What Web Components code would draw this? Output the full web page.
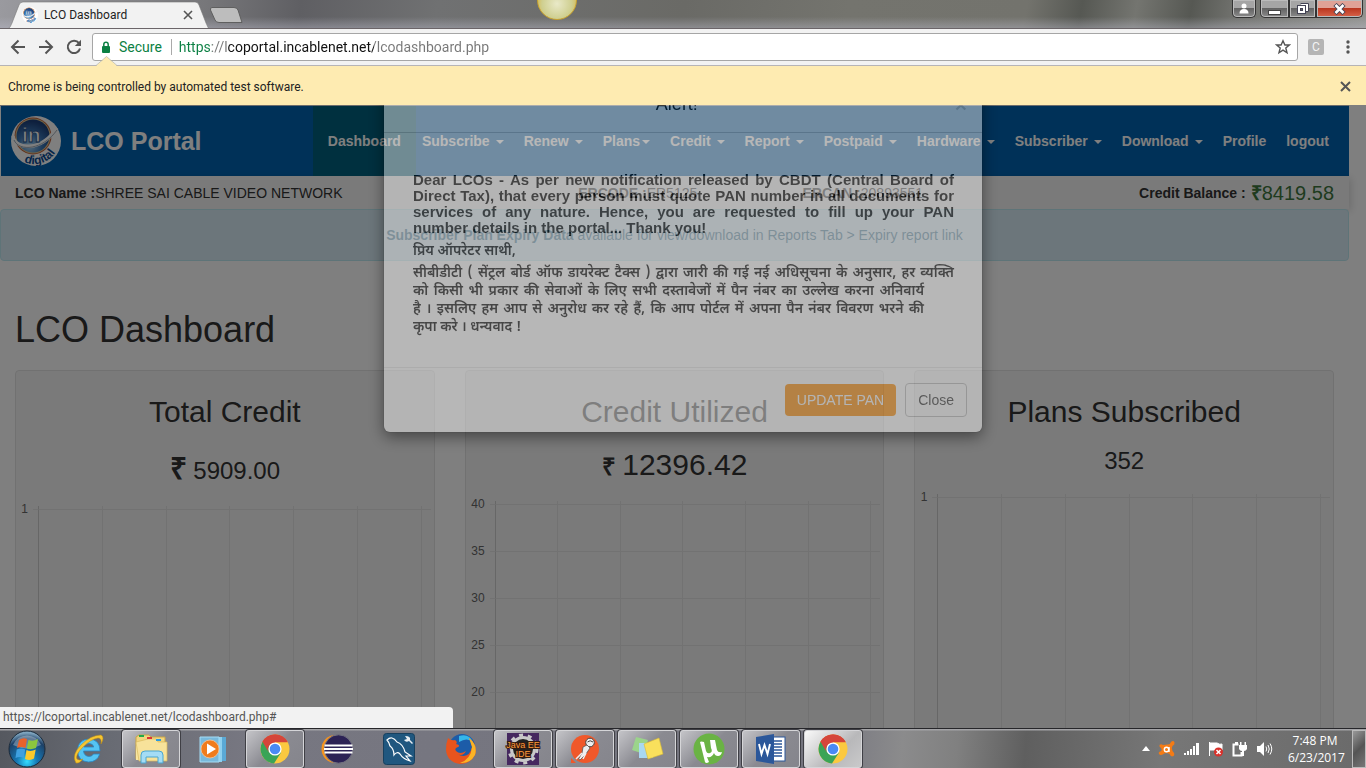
<!DOCTYPE html>
<html lang="en">
<head>
<meta charset="utf-8">
<title>LCO Dashboard</title>
<style>
html, body { margin: 0; height: 100%; }
body { display: flex; flex-direction: column; overflow: hidden; background: #808080; font-family: Roboto, "Noto Sans", sans-serif; font-size: 12px; color: #222; }
</style>
</head>
<body>
<window-titlebar></window-titlebar>
<browser-toolbar></browser-toolbar>
<info-bar>Chrome is being controlled by automated test software.</info-bar>
<browser-view>
  <lco-page></lco-page>
  <pan-alert slot="dialog"></pan-alert>
  <status-bubble slot="status">https://lcoportal.incablenet.net/lcodashboard.php#</status-bubble>
</browser-view>
<task-bar></task-bar>

<script>
function define(name, html, setup) {
  const template = document.createElement('template');
  template.innerHTML = '<style>:host,*{box-sizing:border-box}</style>' + html;
  customElements.define(name, class extends HTMLElement {
    constructor() {
      super();
      this.attachShadow({ mode: 'open' }).append(template.content.cloneNode(true));
    }
    connectedCallback() { if (setup) setup(this, this.shadowRoot); }
  });
}

/* ---------- Logo ---------- */
define('in-logo', `
<style>:host{display:block;flex:none} svg{display:block;width:100%;height:100%}</style>
<svg viewBox="0 0 50 50" role="img" aria-label="in digital">
  <defs>
    <radialGradient id="g" cx=".4" cy=".8" r=".75"><stop offset="0" stop-color="#a9d6f5"/><stop offset=".5" stop-color="#3c78b8"/><stop offset="1" stop-color="#1c3f7a"/></radialGradient>
    <path id="arc" d="M8 43A25 25 0 0 0 48 20"/>
  </defs>
  <circle cx="25" cy="25" r="25" fill="#fff"/>
  <circle cx="22" cy="20" r="18.500" fill="#c0603a"/>
  <circle cx="22" cy="20" r="17.500" fill="#e0c890"/>
  <circle cx="22" cy="20" r="16.500" fill="url(#g)"/>
  <path d="M2 20C4 34 30 36 46 12" fill="none" stroke="#fff" stroke-width="3.500"/>
  <path d="M3 24C8 36 32 34 46 14" fill="none" stroke="#8795a5" stroke-width=".8"/>
  <text x="11" y="26" font-family="Liberation Sans, sans-serif" font-weight="bold" font-size="21" fill="#fff" stroke="#23508a" stroke-width=".8">in</text>
  <text font-family="Liberation Sans, sans-serif" font-weight="bold" font-size="12" fill="#0b4b93"><textPath href="#arc" startOffset="6">digital</textPath></text>
</svg>`);

/* ---------- Browser window ---------- */
define('window-titlebar', `
<style>
:host{display:flex;flex:none;height:29px;position:relative;padding-left:5px;overflow:hidden;align-items:flex-end;border-bottom:1px solid #6b6569;
 background:linear-gradient(to bottom,rgba(255,255,255,0) 60%,rgba(190,190,205,.4)),linear-gradient(100deg,#9a9a9f 0,#77777a 15%,#5f5f63 22%,#707172 32%,#6a6a66 50%,#74746e 62%,#73736d 75%,#565853 79%,#747570 83%,#565853 87%,#6f706c 90%,#92938f 100%)}
.tab{position:relative;display:flex;align-items:center;width:206px;height:28px;margin-bottom:-1px;padding:0 18px 0 17px;gap:6px}
.tab svg.shape{position:absolute;inset:0;width:100%;height:100%}
.tab>*{position:relative}
in-logo{width:16px;height:16px}
.name{flex:1;color:#222;line-height:16px}
button{border:0;background:none;padding:0;display:block}
.new{width:34px;height:16px;margin:0 0 5px -2px}
.orb{position:absolute;left:537px;top:-20px;width:40px;height:40px;border-radius:50%;border:1px solid #c9a32f;background:radial-gradient(circle at 50% 60%,#e9e9c8 0,#cfcf90 50%,#d8b23c 80%)}
.controls{margin-left:auto;align-self:flex-start;display:flex;margin-right:3px}
.controls button{height:18px;border:1px solid #333;border-top:0;box-shadow:inset 0 0 0 1px #bbb;background:linear-gradient(#a5a5a5 0 45%,#606060 46%,#8a8a8a);display:grid;place-items:center}
.user{width:24px;border-radius:0 0 5px 5px;margin-right:4px}
.min{width:29px;border-radius:0 0 0 5px}.max{width:27px}
.controls .x{width:47px;border-radius:0 0 5px 0;background:linear-gradient(#e0a296 0 45%,#b8331c 46%,#d8644a)}
</style>
<div class="tab">
  <svg class="shape" viewBox="0 0 206 28" preserveAspectRatio="none"><path d="M0 28C5 28 5 26 7 22L14 4Q15 1 18 1H190Q193 1 194 4L201 22C203 26 203 28 206 28Z" fill="#f2f2f2" stroke="#777" stroke-width=".6"/></svg>
  <in-logo></in-logo><span class="name">LCO Dashboard</span>
  <button aria-label="Close tab"><svg width="10" height="10" style="display:block"><path d="M1 1L9 9M9 1L1 9" stroke="#555" stroke-width="1.600"/></svg></button>
</div>
<button class="new" aria-label="New tab"><svg width="34" height="16" style="display:block"><path d="M3 .5H25Q28 .5 29 3L33 15.500H10Q7 15.500 6 13L1.500 3Q1 .5 3 .5Z" fill="#bdbdbd" stroke="#5f5f5f"/></svg></button>
<div class="orb"></div>
<div class="controls">
  <button class="user" aria-label="Profile"><svg width="12" height="12"><circle cx="6" cy="3" r="2.500" fill="#fff"/><path d="M1.500 10.500Q1.500 6 6 6T10.500 10.500Z" fill="#fff"/></svg></button>
  <button class="min" aria-label="Minimize"><svg width="13" height="12"><rect x=".5" y="7.500" width="12" height="4" fill="#fff" stroke="#444"/></svg></button>
  <button class="max" aria-label="Restore"><svg width="13" height="12"><path d="M4.500 .5H12.500V8.500H10" fill="#fff" stroke="#445"/><rect x="1.500" y="2.500" width="8" height="8" fill="#fff" stroke="#445"/><rect x="4.500" y="5.500" width="2" height="2" fill="#666" stroke="#445"/></svg></button>
  <button class="x" aria-label="Close"><svg width="13" height="12"><path d="M2 1.500L11 10.500M11 1.500L2 10.500" stroke="#445" stroke-width="4.500"/><path d="M2.500 2L10.500 10M10.500 2L2.500 10" stroke="#fff" stroke-width="2.600"/></svg></button>
</div>`);

define('browser-toolbar', `
<style>
:host{display:flex;flex:none;height:37px;align-items:center;background:#f2f2f2;border-bottom:1px solid #b6b4b6;padding:0 10px;color:#555}
button{border:0;background:none;padding:0;width:28px;height:28px;display:grid;place-items:center;color:inherit;flex:none}
nav{display:flex;margin-left:-6px;width:86px}
.box{flex:1;min-width:0;display:flex;align-items:center;height:28px;background:#fff;border:1px solid #a6a6a6;border-radius:3px;margin-left:2px;padding-left:8px}
.secure{color:#0b8043;font-size:14px;margin:0 9px 0 8px;line-height:20px}
.sep{width:1px;height:16px;background:#aaa;margin-right:7px}
input{flex:1;min-width:0;border:0;outline:0;padding:0;font:14px/20px Roboto,"Noto Sans",sans-serif;color:transparent;
 background:linear-gradient(to right,#0b8043 0 33px,#777 33px 48px,#111 48px 195px,#777 195px);-webkit-background-clip:text;background-clip:text}
.ext{width:16px;height:16px;background:#b5b5b5;border-radius:2px;color:#f4f4f4;font:12px/16px Roboto,sans-serif;margin-left:10px}
.menu{width:8px;margin:0 4px 0 20px}
</style>
<nav aria-label="History">
<button aria-label="Back"><svg width="16" height="16" fill="none" stroke="currentColor" stroke-width="2"><path d="M15 8H2.500M8.500 1.500L2 8L8.500 14.500"/></svg></button>
<button aria-label="Forward"><svg width="16" height="16" fill="none" stroke="currentColor" stroke-width="2"><path d="M1 8H13.500M7.500 1.500L14 8L7.500 14.500"/></svg></button>
<button aria-label="Reload"><svg width="16" height="16" fill="none" stroke="currentColor" stroke-width="2"><path d="M13 4.200A6.200 6.200 0 1 0 14 9.500"/><path d="M15 .8V7H8.800Z" fill="currentColor" stroke="none"/></svg></button>
</nav>
<div class="box">
<svg width="10" height="12"><rect x="1" y="5" width="8" height="7" rx="1" fill="#0b8043"/><path d="M2.800 6V3.500a2.200 2.200 0 0 1 4.400 0V6" fill="none" stroke="#0b8043" stroke-width="1.500"/></svg>
<span class="secure">Secure</span><span class="sep"></span>
<input aria-label="Address" value="https://lcoportal.incablenet.net/lcodashboard.php">
<button aria-label="Bookmark"><svg width="16" height="16"><path d="M8 1.800L9.900 6H14.300L10.800 9L12 13.800L8 11.200L4 13.800L5.200 9L1.700 6H6.100Z" fill="none" stroke="#555" stroke-width="1.400"/></svg></button>
</div>
<button class="ext" aria-label="Extension">C</button>
<button class="menu" aria-label="Menu"><svg width="4" height="14" fill="#555"><circle cx="2" cy="2" r="1.700"/><circle cx="2" cy="7" r="1.700"/><circle cx="2" cy="12" r="1.700"/></svg></button>`);

define('info-bar', `
<style>
:host{display:flex;flex:none;height:39px;position:relative;align-items:center;justify-content:space-between;background:#feebb1;padding:2px 15px 0 8px;line-height:16px;color:#222}
.tip{position:absolute;left:96px;top:-10px}
button{border:0;background:none;padding:0}
svg{display:block}
</style>
<svg class="tip" width="21" height="10"><path d="M0 10L10.500 .5L21 10Z" fill="#feebb1"/><path d="M0 9.500L10.500 .5L21 9.500" fill="none" stroke="#b6b4a6" stroke-width=".7"/></svg>
<slot></slot>
<button aria-label="Close"><svg width="11" height="11"><path d="M1 1L10 10M10 1L1 10" stroke="#555" stroke-width="2"/></svg></button>`);

define('browser-view', `
<style>
:host{display:block;flex:1;min-height:0;position:relative;overflow:hidden;background:#fff;font-family:"Liberation Sans",Arial,sans-serif;font-size:14px;color:#333}
.backdrop{position:absolute;inset:0;background:rgba(0,0,0,.5)}
.status{position:absolute;left:0;bottom:0}
</style>
<slot></slot><div class="backdrop"></div><slot name="dialog"></slot><div class="status"><slot name="status"></slot></div>`);

define('status-bubble', `
<style>:host{display:block;width:453px;height:21px;background:#f2f2f2;border-top-right-radius:4px;padding:0 3px;font:12px/21px Roboto,"Noto Sans",sans-serif;color:#555;white-space:nowrap}</style><slot></slot>`);

/* ---------- Portal page ---------- */
define('nav-item', `
<style>
:host{display:flex;align-items:center;height:100%}
:host([active]){background:#00607e;padding:0 15px;margin-right:-14px}
a{color:#fff;text-decoration:none;font-weight:bold;display:flex;align-items:center;gap:6px}
:host([tight]) a{gap:2px}
i{display:none;border:4px solid transparent;border-top-color:#fff;border-bottom:0;margin-top:2px}
:host([menu]) i{display:block}
</style><a href="#"><slot></slot><i></i></a>`);

define('stat-card', `
<style>
:host{display:block;min-width:0;height:480px;background:#f5f5f5;border:1px solid #e3e3e3;border-radius:4px;padding-top:21px;text-align:center}
h2{margin:0;font-weight:normal;font-size:30px;line-height:40px}
.value{margin:var(--value-gap,19px) 0 var(--chart-gap,17px);line-height:36px;font-size:24px;white-space:nowrap}
::slotted(.big){font-size:30px}
</style>
<h2><slot name="title"></slot></h2>
<div class="value"><slot></slot></div>
<slot name="chart"></slot>`);

define('grid-chart', `
<style>
:host{display:block;padding:0 3px 0 5px;font-size:12px;line-height:14px;color:#666;--line:#e4e4e4;--axis:#cfcfcf}
.row{display:grid;grid-template-columns:auto 5px repeat(6,1fr) 10px;height:47px}
.row.tall{height:300px}
.row.cap{height:3px}
.row>*{border-top:1px solid var(--line)}
.row.cap>*{border-top:0}
.row .label{border:0;margin-top:-7px;width:12px;padding-right:5px;text-align:right}
.row.wide .label{width:19px}
.row.cap .label{margin:0}
.v{border-left:1px solid var(--line)}
.v.first{border-left-color:var(--axis)}
</style>`, (host, root) => {
  if (root.querySelector('.row')) return;
  const ticks = host.getAttribute('ticks').split(',');
  const wide = ticks[0].length > 1 ? ' wide' : '';
  const row = (label, cls) => {
    const el = document.createElement('div');
    el.className = 'row ' + cls + wide;
    el.innerHTML = '<div class="label">' + label + '</div><div></div><div class="v first"></div>' + '<div class="v"></div>'.repeat(6);
    root.append(el);
  };
  row('', 'cap');
  ticks.forEach(t => row(t, wide ? '' : 'tall'));
});

define('lco-page', `
<style>
:host{display:block;padding-right:17px}
header{display:flex;align-items:center;height:70px;border-top:0;background:#0062b0;padding:0 20px 0 10px;margin-left:1px}
.edge{height:1px;background:#d8d8d8}
in-logo{width:50px;height:50px}
.brand{font-size:25px;font-weight:bold;color:#fff;margin-left:10px;text-decoration:none;white-space:nowrap}
nav{display:flex;gap:20px;height:100%;margin-left:auto}
.account{display:grid;grid-template-columns:427fr 170fr 170fr 233fr;align-items:center;height:33px;padding:0 15px;background:#f5f5f5;box-shadow:2px 2px 8px rgba(0,0,0,.15);white-space:nowrap}
.balance{justify-self:end;display:flex;align-items:center;gap:5px}
.amount{font-size:20px;color:#3c763d}
.notice{background:#d9edf7;border:1px solid #bce8f1;border-radius:4px;padding:15px;line-height:20px;text-align:center;color:#31708f;position:relative}
h1{margin:49px 15px 20px;font-weight:normal;font-size:36px;line-height:40px}
.cards{display:grid;grid-template-columns:repeat(3,minmax(0,1fr));gap:30px;padding:0 15px}
.utilized{--value-gap:15px;--chart-gap:16px}
.plans{--value-gap:11px;--chart-gap:15px}
</style>
<div class="edge"></div>
<header><in-logo></in-logo><a class="brand" href="#">LCO Portal</a>
<nav><nav-item active>Dashboard</nav-item><nav-item menu>Subscribe</nav-item><nav-item menu>Renew</nav-item><nav-item menu tight>Plans</nav-item><nav-item menu>Credit</nav-item><nav-item menu>Report</nav-item><nav-item menu>Postpaid</nav-item><nav-item menu>Hardware</nav-item><nav-item menu>Subscriber</nav-item><nav-item menu>Download</nav-item><nav-item>Profile</nav-item><nav-item>logout</nav-item></nav></header>
<section class="account">
<span><b>LCO Name :</b>SHREE SAI CABLE VIDEO NETWORK</span><span><b>ERCODE :</b>ER5125</span><span><b>ERCAN :</b>20893551</span><span class="balance"><b>Credit Balance :</b><span class="amount"><b>₹</b>8419.58</span></span>
</section>
<div class="notice"><b>Subscriber Plan Expiry Data</b> available for view/download in Reports Tab &gt; Expiry report link</div>
<h1>LCO Dashboard</h1>
<div class="cards">
<stat-card><span slot="title">Total Credit</span><b class="big">₹</b> 5909.00<grid-chart slot="chart" ticks="1"></grid-chart></stat-card>
<stat-card class="utilized"><span slot="title">Credit Utilized</span><b>₹</b> <span class="big">12396.42</span><grid-chart slot="chart" ticks="40,35,30,25,20,15,10"></grid-chart></stat-card>
<stat-card class="plans"><span slot="title">Plans Subscribed</span>352<grid-chart slot="chart" ticks="1"></grid-chart></stat-card>
</div>`);

define('pan-alert', `
<style>
:host{display:block;position:absolute;top:-29px;left:0;right:0;pointer-events:none}
.dialog{pointer-events:auto;width:598px;max-width:100%;margin:0 auto;background:#fff;border-radius:6px;opacity:.44;box-shadow:0 5px 15px #000,0 0 0 1px rgba(0,0,0,.2);line-height:20px}
header{display:flex;padding:15px;border-bottom:1px solid #ccc;color:#000}
h4{flex:1;margin:0;font-weight:normal;font-size:18px;line-height:26px;text-align:center}
.close{border:0;background:none;padding:0;font:bold 21px/21px "Liberation Sans",sans-serif;color:rgba(0,0,0,.2)}
.body{padding:39px 28px 30px 29px;color:#000}
.en{margin:0;font-weight:bold;font-size:15px;line-height:16px;white-space:nowrap}
.en span{display:block;text-align:justify;text-align-last:justify}
.en span:last-child{text-align-last:left}
.hi{margin:0;font:600 14px/18px "Noto Sans Devanagari","Noto Sans",sans-serif}
.hi.greeting{margin:7px 0 4px}
.hi span{display:block;text-align-last:justify}
.hi .short{padding-right:30px}
.hi span:last-child{text-align-last:left}
footer{display:flex;justify-content:flex-end;align-items:center;gap:9px;border-top:1px solid #e5e5e5;padding:15px}
footer button{font:14px/20px "Liberation Sans",Arial,sans-serif;padding:6px 12px;border-radius:4px}
.update{background:#ff8c00;color:#fff;border:0}
.cancel{background:#fff;border:1px solid #bbb;color:#333}
</style>
<div class="dialog" role="dialog" aria-label="Alert">
<header><h4>Alert!</h4><button class="close" aria-label="Close">×</button></header>
<div class="body">
<p class="en"><span>Dear LCOs - As per new notification released by CBDT (Central Board of</span><span>Direct Tax), that every person must quote PAN number in all documents for</span><span>services of any nature. Hence, you are requested to fill up your PAN</span><span>number details in the portal... Thank you!</span></p>
<p class="hi greeting" lang="hi">प्रिय ऑपरेटर साथी,</p>
<p class="hi" lang="hi"><span>सीबीडीटी ( सेंट्रल बोर्ड ऑफ डायरेक्ट टैक्स ) द्वारा जारी की गई नई अधिसूचना के अनुसार, हर व्यक्ति</span><span class="short">को किसी भी प्रकार की सेवाओं के लिए सभी दस्तावेजों में पैन नंबर का उल्लेख करना अनिवार्य</span><span class="short">है । इसलिए हम आप से अनुरोध कर रहे हैं, कि आप पोर्टल में अपना पैन नंबर विवरण भरने की</span><span>कृपा करे । धन्यवाद !</span></p>
</div>
<footer><button class="update">UPDATE PAN</button><button class="cancel">Close</button></footer>
</div>`);

/* ---------- Taskbar ---------- */
const chromeIcon = `<svg width="30" height="30" viewBox="0 0 30 30"><circle cx="15" cy="15" r="14.500" fill="#fbc940"/><path d="M15 15L2.500 7.700A14.500 14.500 0 0 1 27.500 7.700H15Z" fill="#d5453a"/><path d="M15 15L2.500 7.700A14.500 14.500 0 0 0 14 29.500L21 18.500Z" fill="#3aa456"/><path d="M2.500 7.700A14.500 14.500 0 0 1 27.800 8.300H15A7 7 0 0 0 8.900 18.400Z" fill="#d5453a"/><circle cx="15" cy="15" r="6.600" fill="#fff"/><circle cx="15" cy="15" r="5.300" fill="#4a8af4"/></svg>`;
define('task-button', `
<style>
:host{display:block;width:58px;height:38px}
button{width:100%;height:100%;padding:0;border:1px solid transparent;border-radius:3px;background:none;display:grid;place-items:center}
:host([open]) button{border-color:#d5d5d8;box-shadow:0 0 0 1px #3f3f45;background:linear-gradient(135deg,#c4c4c8 0,#9c9ca2 35%,#8a8a91 50%,#85858c)}
:host([current]) button{background:linear-gradient(135deg,#fafafa,#b8b8ba 60%,#c9c9ca)}
</style><button><slot></slot></button>`, host => host.shadowRoot.querySelector('button').setAttribute('aria-label', host.title));

define('task-bar', `
<style>
:host{display:flex;flex:none;height:40px;align-items:center;border-top:1px solid #26262a;color:#fff;
 background:linear-gradient(#a3a3a6 0 1px,transparent 2px),linear-gradient(95deg,#55585f 0,#686b73 8%,#777781 18%,#74747e 60%,#8b8b8c 66%,#808080 70%,#5f5f5f 75%,#777 85%,#6a6a6a 100%)}
svg{display:block}
button{border:0;background:none;padding:0;color:inherit}
.start{margin:0 14px 0 8px}
.apps{display:flex;gap:4px}
.tray{margin-left:auto;display:flex;align-items:center;gap:8px}
.clock{text-align:center;line-height:17px;width:54px;margin-left:7px;white-space:nowrap;font-size:12px;font-family:"Open Sans","Noto Sans",sans-serif}
.desk{width:14px;height:38px;margin-left:2px;border:1px solid #bbb;background:linear-gradient(135deg,#999,#555 50%,#777)}
</style>
<button class="start" aria-label="Start"><svg width="38" height="38" viewBox="0 0 38 38"><defs><radialGradient id="o" cx=".5" cy=".85" r=".8"><stop offset="0" stop-color="#35dcff"/><stop offset=".35" stop-color="#1778b4"/><stop offset=".8" stop-color="#1d4066"/><stop offset="1" stop-color="#7fa5bf"/></radialGradient></defs><circle cx="19" cy="19" r="18" fill="url(#o)" stroke="#1b2a3a"/><path d="M5 15A15 15 0 0 1 33 15Q19 22 5 15Z" fill="#fff" opacity=".3"/><path d="M11 10Q15 7 19 9L17.500 18Q13 16 9 18Z" fill="#e8622c"/><path d="M20.500 10Q25 12 30 9L28 18Q23 20 18.800 18.500Z" fill="#8cc63e"/><path d="M8.700 19.500Q13 17.500 17.200 19.500L15.700 28Q12 26 7.500 28Z" fill="#3fa0e0"/><path d="M18.500 20Q23 22 27.700 19.500L26 28.500Q22 31 17 29Z" fill="#fcc92b"/></svg></button>
<div class="apps">
<task-button title="Internet Explorer"><svg width="32" height="32" viewBox="0 0 32 32"><path d="M27 18H10.500Q11 23 16 23.500Q19 23.500 20.500 21H26.800Q24 29 15.500 29Q5 28.500 4.500 17.500Q5 6.500 16 6Q27 6.500 27 18ZM20.800 14Q20 10.500 16 10.500T10.800 14Z" fill="#55c4f3" stroke="#2787c4" stroke-width=".8"/><path d="M3 30Q-2 22 8 12T28 2Q32 4 28 11Q29 5 25 5Q18 6 10 14T4 26Q6 28 10 26Q6 31 3 30Z" fill="#f6c631" stroke="#c08d10" stroke-width=".5"/></svg></task-button>
<task-button open title="Explorer"><svg width="34" height="32" viewBox="0 0 34 32"><path d="M2 4L5 2H15L17 4H31V26H2Z" fill="#f2d67e" stroke="#c9a548"/><path d="M2 9H31V27H2Z" fill="#f8e6a0"/><path d="M2 9L14 6H22L24 9H33V28H5Z" fill="#f7e29a" stroke="#d9b95c" stroke-width=".7"/><rect x="5" y="2" width="5" height="2" fill="#1faa4a"/><rect x="13" y="4" width="5" height="2" fill="#d33"/><rect x="22" y="6" width="5" height="2" fill="#2b9be0"/><path d="M7 30V22Q7 18 11 18H25Q29 18 29 22V30H24V24H12V30Z" fill="#a4dcf5" stroke="#4ba6d0"/></svg></task-button>
<task-button title="Media Player"><svg width="30" height="28" viewBox="0 0 30 28"><path d="M8 2H28V26H8Z" fill="#5aa9d6"/><path d="M5 2H24V27H5Z" fill="#8fd0ee"/><path d="M2 2H21V27H2Z" fill="#78b9dc" stroke="#a5dcf5"/><circle cx="12" cy="14" r="9" fill="#f07c1c" stroke="#fbc493" stroke-width=".8"/><path d="M9 8.500V19.500L18 14Z" fill="#fff"/></svg></task-button>
<task-button open title="Chrome">${chromeIcon}</task-button>
<task-button title="Eclipse"><svg width="34" height="30" viewBox="0 0 34 30"><circle cx="15.500" cy="15" r="14" fill="#f7941e"/><circle cx="18.500" cy="15" r="14.200" fill="#2c2255" stroke="#737380"/><path d="M4.500 11.500H32.500M4 15H33M4.500 18.500H32.500" stroke="#fff" stroke-width="1.800"/></svg></task-button>
<task-button title="MySQL Workbench"><svg width="32" height="32" viewBox="0 0 32 32"><rect x=".5" y=".5" width="31" height="31" rx="3" fill="#20577f" stroke="#17405f"/><path d="M4 7Q9 2 14 9Q20 11 22 19L28 23L23 23L27 28Q20 26 17 21Q14 18 11 22Q11 16 7 13Q6 9 4 7Z" fill="none" stroke="#fff" stroke-width="1.200"/><path d="M22 3L24 6L21 7Q23 10 26 8L29 11L30 10L27 7Q28 3 22 3Z" fill="#e8eef3"/></svg></task-button>
<task-button title="Firefox"><svg width="32" height="32" viewBox="0 0 32 32"><circle cx="17" cy="14" r="13" fill="#1c5ca8"/><path d="M14 3Q24 0 28 9Q22 4 14 9Z" fill="#35b7ea"/><path d="M3 5Q6 8 10 7Q13 9 11 11Q16 12 13 14Q9 15 11 18Q15 22 21 18Q18 24 12 21Q24 27 27 14Q27 9 24 5Q33 12 30 22Q25 31 15 31Q2 29 1 17Q1 10 3 5Z" fill="#e8541d"/><path d="M24 5Q33 12 30 22Q25 31 15 30Q26 26 27 14Z" fill="#fbb425"/></svg></task-button>
<task-button open title="Java EE IDE"><svg width="36" height="32" viewBox="-2 0 36 32"><rect width="32" height="32" fill="#45285f"/><circle cx="16" cy="16" r="11.500" fill="#222" stroke="#c9c9c9" stroke-width="3"/><circle cx="16" cy="16" r="14" fill="none" stroke="#c9c9c9" stroke-width="3" stroke-dasharray="4 4.800"/><text x="16" y="15" text-anchor="middle" font-family="Liberation Sans, sans-serif" font-size="9" fill="#ff9a3c" stroke="#331a10" stroke-width="2" paint-order="stroke">Java EE</text><text x="16" y="24" text-anchor="middle" font-family="Liberation Sans, sans-serif" font-size="9" fill="#ff9a3c" stroke="#331a10" stroke-width="2" paint-order="stroke">IDE</text></svg></task-button>
<task-button open title="Postman"><svg width="30" height="30" viewBox="0 0 30 30"><circle cx="15" cy="15" r="14" fill="#f0582a"/><path d="M1 24L6 29H1Z" fill="#f0582a"/><circle cx="20" cy="8.500" r="4.300" fill="#eee" stroke="#444"/><path d="M17.500 8Q20 5.500 23 8" stroke="#444" fill="none"/><path d="M17 11L20 14L16 20L10 26L8.500 25L12 19L13 13Z" fill="#eee" stroke="#555" stroke-width=".8"/><path d="M12 19L6 25M16 19L13 25" stroke="#eee" stroke-width="1.500"/></svg></task-button>
<task-button open title="Sticky Notes"><svg width="34" height="28" viewBox="0 0 34 28"><path d="M6 2L18 5L14 19L2 15Z" fill="#9bd48b"/><rect x="9" y="8" width="14" height="15" fill="#a9d8f2"/><path d="M14 9L29 3L33 19L18 24Z" fill="#f9e05c" stroke="#d9bb35" stroke-width=".6"/></svg></task-button>
<task-button open title="uTorrent"><svg width="32" height="32" viewBox="0 0 32 32"><circle cx="16" cy="16" r="15.500" fill="#6ab344"/><path d="M7 9Q8 8 11 9L13 18Q14 21 17 20T18 15L17 7L22 7L24 17Q25 20 29 19Q28 23 25 23Q22 23 21 20Q19 25 14 24L16 29Q13 31 12 29Z" fill="#fff"/></svg></task-button>
<task-button open title="Word"><svg width="32" height="32" viewBox="0 0 32 32"><rect x="15" y="4" width="15" height="24" fill="#fff" stroke="#2b579a"/><path d="M19 8H27M19 11H27M19 14H27M19 17H27M19 20H27M19 23H27" stroke="#2b579a" stroke-width="1.500"/><path d="M1 4L19 1V31L1 28Z" fill="#2b579a"/><path d="M4 11L6.500 21L9.500 12L12.500 21L15 11" fill="none" stroke="#fff" stroke-width="1.900"/></svg></task-button>
<task-button open current title="Chrome">${chromeIcon}</task-button>
</div>
<div class="tray">
<svg width="8" height="6"><path d="M0 5L4 0L8 5Z" fill="#fff"/></svg>
<svg width="18" height="18" viewBox="0 0 18 18"><path d="M1.500 5Q3 3.500 5 5L9 4.500Q12 5 13 2Q15.500 0 16.500 2.500Q17 4.500 14.500 6Q13 8 14.500 11Q17.500 14 15.500 16Q13 17.500 11.500 14Q8 12 5.500 14Q2.500 16 1 14Q0 12 2.500 11.500Q5 10 2.500 7.500Q1 6.500 1.500 5Z" fill="#f47b15"/><circle cx="8.500" cy="9.500" r="2.200" fill="none" stroke="#fff" stroke-width="1.400"/><path d="M11 7V12" stroke="#fff" stroke-width="1.400"/></svg>
<svg width="16" height="14" fill="#fff"><path d="M0 11H2V13H0ZM3 9H5V13H3ZM6 7H8V13H6ZM9 4H11V13H9ZM12 1H15V13H12Z"/></svg>
<svg width="16" height="16"><path d="M1.500 1V15M2 2H9Q12 4 14 3V9Q11 10 9 9H2Z" fill="#fff" stroke="#fff"/><circle cx="10.500" cy="11" r="4.500" fill="#d9302a"/><path d="M8.500 9L12.500 13M12.500 9L8.500 13" stroke="#fff" stroke-width="1.500"/></svg>
<svg width="16" height="16"><path d="M6.500 3.500H1.500V14.500H9.500V11" fill="none" stroke="#fff" stroke-width="2"/><path d="M3 1H6V3H3ZM8 1H9.500V4H12.500V1H14V4H15V8Q14 10 12 10V15H10V10Q8 10 7 8V4H8Z" fill="#fff"/></svg>
<svg width="17" height="16"><path d="M1 5H4L8 1V15L4 11H1Z" fill="#fff"/><path d="M10 5.500Q11.500 8 10 10.500M12 4Q14.500 8 12 12M14 2.500Q17.500 8 14 13.500" fill="none" stroke="#fff"/></svg>
<button class="clock">7:48 PM<br>6/23/2017</button>
<button class="desk" aria-label="Show desktop"></button>
</div>`);
</script>
</body>
</html>
